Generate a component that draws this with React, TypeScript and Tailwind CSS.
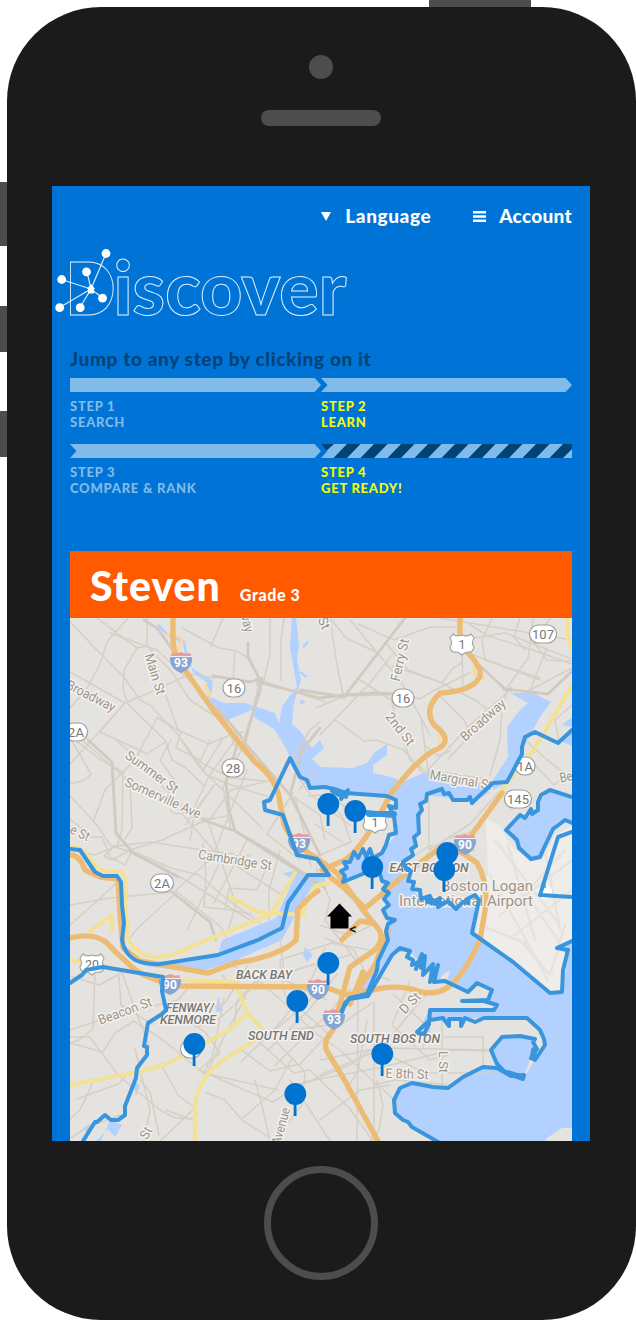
import React from "react";

const minorRoads = [
  "M70 622L95 648L123 676L140 700L150 705L178 735L200 768L223 790L262 828",
  "M97 618L137 648L124 670L123 690L128 704L165 740L172 760L186 768L203 785",
  "M128 618L107 642L100 664L86 690L70 708",
  "M137 648L147 646L147 618M147 646L172 672L190 700L213 715",
  "M110 633L157 650L205 695L226 722L234 744L262 768L281 785",
  "M70 672L125 703L160 688L190 674L214 678",
  "M124 704L100 732L135 748L147 754L165 742M125 703L70 764",
  "M157 718L135 760L105 790L93 822M158 718L181 732L176 748L200 760",
  "M166 696L178 730L209 744L228 736L243 732",
  "M182 628L219 648L237 651L248 658L260 680L325 702",
  "M223 618L211 646M235 651L233 682M270 618L270 654L264 680L256 685",
  "M284 618L281 640L281 680M330 618L337 665L344 699",
  "M259 682L246 742L230 770L223 788L231 830",
  "M70 736L101 760L123 772L122 830L117 846",
  "M70 738L91 774L85 780L70 784M82 740L130 782L132 828L125 839",
  "M170 800L215 852L282 895",
  "M116 740L133 755L157 781L188 812L175 814L170 810",
  "M171 740L160 760L177 784L165 797L151 792M182 740L207 775L231 785L272 798",
  "M210 740L200 762L231 778L265 781M222 740L202 772M235 740L209 776L186 825",
  "M215 784L195 812L190 840M205 797L191 817L210 819L231 790L268 781",
  "M70 796L97 825L110 845L133 853L160 866L187 881L250 920",
  "M70 819L92 837L102 837L110 857L125 865L133 849L162 840L206 820L227 816",
  "M73 850L95 855L117 846L151 842L202 850L250 856",
  "M115 846L104 856L112 860L130 850L171 868L199 875L228 900L263 925",
  "M70 905L110 898L174 892L212 858L247 770",
  "M70 925L96 902L120 880M177 892L138 928L128 940M177 892L221 927L230 945",
  "M220 862L200 903L187 930M203 843L206 875L204 907L231 910L251 914",
  "M207 818L236 905L228 930M247 840L214 903M266 869L257 890L229 888L225 910",
  "M280 851L269 890L269 919M290 795L320 815L325 840M300 780L311 795L325 805",
  "M295 797L306 840L311 867M290 762L310 730L320 722M299 790L315 770",
  "M293 793L267 834L300 860M308 796L322 795L342 816L351 842L320 855",
  "M322 805L350 825M330 794L360 820M315 824L342 842M316 868L330 900L325 920L357 962",
  "M316 708L344 696L400 625M330 618L346 638L376 652M344 696L386 695L402 693L420 699L433 691L471 672",
  "M350 620L400 680L420 716L430 735M358 624L394 640L430 627L460 627",
  "M360 680L391 700L410 760L427 772M385 642L408 670L442 683L453 668L462 663",
  "M392 666L440 682L455 690L477 701L490 712M392 655L370 683L320 735",
  "M335 720L364 741L376 740L404 750L423 773L447 773L494 780",
  "M421 718L428 771M440 696L464 720L471 735L448 759M450 751L438 756L424 745",
  "M428 770L470 725L510 690M490 775L500 740L502 710",
  "M440 618L572 640M466 622L488 636L530 649L572 664M492 618L482 640L485 660L540 678",
  "M462 642L460 620M462 653L463 688M460 640L505 633L572 659M465 652L540 680",
  "M520 618L514 637L525 650M533 618L528 658L507 688L505 699M547 648L530 690L572 668",
  "M551 618L532 640L547 660L560 661L572 661M530 760L554 785L570 772",
  "M572 705L555 720L559 742M525 740L545 758L560 770M505 785L478 830L450 838",
  "M429 850L470 824L505 785M429 800L429 850M405 862L429 846L475 850",
  "M320 925L350 936L372 925M325 938L354 950L365 972L390 980",
  "M70 976L99 985L122 973L138 1017L150 1047M95 972L93 1029L79 1040L70 1043",
  "M70 1030L113 1016L178 1000L194 981M119 976L121 1005L152 1024",
  "M70 1037L90 1037L118 1075L160 1110L175 1118L195 1119",
  "M70 1043L103 1052L115 1033L134 1021L163 1040L203 1073L278 1090",
  "M93 1082L80 1110L70 1119M77 1099L118 1084L130 1072M135 1049L150 1110L144 1141",
  "M140 1080L150 1092L159 1135M70 1138L88 1127L120 1115M160 1063L178 1095L197 1110",
  "M160 1141L196 1107M178 1014L205 1032L220 1053L200 1069M166 1110L193 1120",
  "M196 1027L219 1019L240 1000L265 975M224 998L213 1054L204 1073",
  "M200 1070L240 1088L273 1102L304 1082L378 1068L452 1050L496 1051",
  "M225 962L255 977L281 1000L315 1033L340 1050L372 1080L400 1105",
  "M222 975L245 998L225 1035L206 1075M248 965L225 1003L205 1010",
  "M263 973L237 1001L234 1027M280 962L285 996L322 1028L331 1037",
  "M240 1049L270 1071L300 1064L330 1032L372 1003M240 1048L280 1026L310 1000L320 987",
  "M258 1041L294 1073L310 1070L350 1109L373 1141M267 1032L305 1072L302 1105L273 1141",
  "M255 1080L263 1110L270 1141M243 1118L275 1090L291 1060M205 1092L225 1100L242 1120L275 1141",
  "M290 1080L310 1110L330 1141M300 1085L350 1065L370 1050M280 940L285 980L327 1000",
  "M325 948L307 989L280 1023L241 1062M337 974L309 1010L268 1050M350 989L327 1015L275 1065",
  "M280 960L332 943L369 950M288 972L350 955M267 980L314 964M282 1038L290 1030L330 1025",
  "M358 990L357 1141M374 1003L374 1141M367 1020L358 1070L346 1091M320 1075L379 1050L430 990",
  "M393 994L430 1029L423 1047M410 981L392 1025L430 1060L448 1055M442 1020L442 1085",
  "M444 1037L483 1037L483 1066M320 1060L379 1048L491 1050M378 1045L395 1058L425 1073L492 1073",
  "M377 1081L383 1105L379 1130L370 1141M375 1085L395 1080L450 1085M320 1120L360 1090L390 1085",
];

const mediumRoads = [
  "M144 620L158 629L174 652L204 699L220 711L242 738",
  "M258 682L320 698L344 695L375 693L400 694M300 690L344 697L405 618",
  "M213 676L250 682L262 678L260 690L244 742M248 643L248 657L260 680",
  "M465 652L505 689L548 694L572 671M88 740L112 762L116 833L133 853L178 877",
  "M238 742L226 782L229 810L235 831L320 885M203 820L235 831L278 856L325 888",
  "M244 742L290 795L320 855M172 892L210 922L216 940M290 795L302 750L320 728",
];

const highways = [
  "M173 618L173 642Q174 658 187 673L213 710L255 762Q278 780 280 803L284 824Q292 844 315 857L337 873L363 910L380 931Q384 943 372 952L350 967L343 993L333 1030Q322 1042 327 1051L345 1081L378 1141",
  "M460 618L460 645Q482 665 480 676Q474 691 440 693Q423 709 434 725Q457 742 433 751Q415 762 390 795Q364 847 345 860L322 870",
  "M502 793L462 848L437 850L407 873L363 910",
  "M440 848L463 853L477 863Q487 880 486 905L480 940Q466 971 453 983Q440 996 421 992Q403 985 382 988L347 995L325 987L180 986Q145 979 132 967Q112 949 107 943Q94 932 70 938",
  "M70 855Q80 855 85 870L100 877L118 879L120 915L123 948L140 961L208 973L235 963L252 960Q285 952 296 940L298 909Q311 895 318 891",
  "M325 873L344 888L365 908M342 940L360 921L373 923M363 972L350 1004M388 930L375 965L351 999",
];

const yellowRoads = [
  "M70 847Q84 846 93 863Q99 873 122 872Q127 878 125 900L128 939Q137 956 155 957Q175 957 190 947L252 922L272 913L295 873M230 897L258 912L304 915",
  "M70 960L180 980L235 982L247 1013L265 1032",
  "M70 1085L138 1072L165 1065L198 1047L232 1028L247 1013M265 1034L225 1059Q196 1078 195 1110L195 1141",
  "M572 685L535 748L500 792M568 618Q565 635 572 650",
  "M302 913L315 886L340 880M90 931L112 915L112 930",
];

const boundaries = [
  "M70 849L80 850L95 872L103 876L117 876L121 882L122 905L124 923L122 940Q124 953 135 960Q148 965 160 964L218 955L258 940L282 928L288 903L308 875L329 875L317 859L297 855L283 815L265 810L264 802L270 800L290 758L300 777L307 780L310 788L325 787L334 789L346 793L387 796L396 800L396 808L389 806L394 815L367 812",
  "M332 791L341 796L345 792L341 799L348 790L346 797M369 814L394 816L396 833L389 835L386 845L382 853L373 858L370 849L366 857L363 849L358 858L354 852L350 862L344 862L347 868L341 871L345 876L343 882L365 873",
  "M377 863L382 881L388 883L383 889L389 893L384 899L389 905L383 910L387 918L395 920L388 924L386 931L388 940L378 961L377 970L367 994L350 998L345 1003L342 1012",
  "M342 1010L349 999L368 996L392 955L400 948L410 951L407 957L413 960L412 965L418 962L416 969L422 954L421 968L425 956L423 975L433 964L430 982L438 965L434 982L445 981L468 992L477 983L492 990L488 1000L462 1001L484 1001L497 1005L494 1010L430 1010L429 1024L424 1034L417 1032L430 1020L443 1018L449 1026L449 1019L461 1019L461 1026L465 1018L475 1022L484 1018L527 1018L540 1030L544 1039L545 1045L535 1060L531 1058L537 1049L533 1042L535 1039L520 1036L502 1037L491 1050L497 1064L506 1073L523 1079L524 1075L511 1076L497 1068L483 1067L463 1077L448 1088L433 1087L412 1083L400 1088L394 1100L395 1113L403 1120L408 1122L412 1127L440 1143",
  "M572 730L558 743L535 732L525 737L522 747L522 754L507 782L493 783L477 798L472 803L470 797L467 800L453 800L449 793L444 794L442 789L427 794L426 801L420 804L422 810L418 815L419 833L414 837L416 846L411 849L413 855L403 862L406 869L411 871L408 881L414 882L412 889L420 890L421 899L430 896L433 903L440 898L438 907L448 901L456 909L463 902L468 903L467 899L475 895L479 900L472 933L513 962L550 993L562 992L563 970L568 950L557 948L572 941",
  "M572 797L550 790L541 795L538 802L538 810L532 814L531 809L525 818L520 815L506 830L517 840L519 848L531 859L540 857L543 850L553 829L565 820L572 823M572 832L558 837L540 895L572 897",
  "M70 983L82 975L86 970L103 967L163 977L162 991L166 1010L162 1014L148 1023L144 1046L147 1047L147 1055L137 1068L136 1078L125 1106L125 1115L118 1120L111 1120L105 1115L97 1122L95 1122L83 1141",
];

const pins = [
  [328, 804], [355, 811], [372, 867], [447, 853], [444, 870],
  [328, 963], [297, 1001], [194, 1044], [382, 1054], [295, 1094],
];

type Label = { t: string; x: number; y: number; w: number; r?: number; dark?: boolean; size?: number };
const labels: Label[] = [
  { t: "Main St", x: 155, y: 674, w: 42, r: 73 },
  { t: "Broadway", x: 91, y: 696, w: 53, r: 27 },
  { t: "Ferry St", x: 400, y: 660, w: 43, r: -77 },
  { t: "2nd St", x: 400, y: 729, w: 38, r: 52 },
  { t: "Broadway", x: 483, y: 720, w: 56, r: -42 },
  { t: "Marginal St", x: 461, y: 780, w: 63, r: 10 },
  { t: "Summer St", x: 152, y: 772, w: 62, r: 36 },
  { t: "Somerville Ave", x: 163, y: 798, w: 82, r: 24 },
  { t: "Cambridge St", x: 235, y: 860, w: 74, r: 9 },
  { t: "e St", x: 80, y: 833, w: 20, r: 25 },
  { t: "Be", x: 566, y: 777, w: 13, r: -13 },
  { t: "Beacon St", x: 125, y: 1011, w: 56, r: -20 },
  { t: "St", x: 146, y: 1133, w: 12, r: -60 },
  { t: "St", x: 324, y: 623, w: 12, r: 65 },
  { t: "way", x: 247, y: 622, w: 20, r: 75 },
  { t: "D St", x: 410, y: 1003, w: 24, r: -45 },
  { t: "L St", x: 443, y: 1062, w: 22, r: 90 },
  { t: "E 8th St", x: 407, y: 1074, w: 43, r: 2 },
  { t: "Avenue", x: 281, y: 1126, w: 38, r: -74 },
  { t: "EAST BOSTON", x: 429, y: 868, w: 79, dark: true },
  { t: "BACK BAY", x: 264, y: 975, w: 56, dark: true },
  { t: "FENWAY/", x: 190, y: 1008, w: 48, dark: true },
  { t: "KENMORE", x: 188, y: 1020, w: 56, dark: true },
  { t: "SOUTH END", x: 281, y: 1036, w: 66, dark: true },
  { t: "SOUTH BOSTON", x: 395, y: 1039, w: 90, dark: true },
  { t: "Boston Logan", x: 487, y: 886, w: 92, size: 15 },
  { t: "International Airport", x: 466, y: 901, w: 134, size: 15 },
];

const routes = [
  { t: "107", x: 543, y: 634, w: 27 }, { t: "16", x: 234, y: 688, w: 22 },
  { t: "16", x: 403, y: 698, w: 22 }, { t: "28", x: 233, y: 768, w: 22 },
  { t: "2A", x: 76, y: 732, w: 23 }, { t: "2A", x: 162, y: 883, w: 23 },
  { t: "1A", x: 525, y: 766, w: 20 }, { t: "145", x: 518, y: 799, w: 27 },
  { t: "", x: 191, y: 1049, w: 21 },
];

const interstates = [
  { t: "93", x: 181, y: 662 }, { t: "93", x: 299, y: 843 }, { t: "90", x: 465, y: 844 },
  { t: "90", x: 170, y: 984 }, { t: "90", x: 318, y: 989 }, { t: "93", x: 334, y: 1019 },
];

const federal = [
  { t: "1", x: 462, y: 644 }, { t: "1", x: 375, y: 822 }, { t: "20", x: 92, y: 964 },
];

function BostonMap() {
  return (
    <svg viewBox="70 618 502 523" className="block h-[523px] w-[502px] bg-[#e5e3df] font-[Roboto,sans-serif]">
      <g fill="#b3d1ff">
        <path d="M192 668L213 681L211 697L223 703L245 703L275 713L279 724L282 706L297 687L290 647L292 618H296L299 645L297 660L301 680L294 703L292 724L301 732L312 748L320 740L324 748L312 759L321 767L353 768L367 763L375 752L387 744L387 755L373 765L373 773L392 777L403 782L430 770L460 787L493 780L508 757L507 727L520 710L528 703L510 693L533 693L551 702L540 717L522 750L507 782L475 801L425 795L418 835L404 863L410 887L425 902L479 898L472 933L513 962L550 993L562 992L563 960L557 948L572 941V1141H440L408 1122L394 1110Q393 1090 412 1083L448 1088L483 1067H497L523 1079L535 1060L545 1045L540 1030L527 1018H430L417 1032L430 1009H495L488 1000L462 1001L488 998L492 990L477 983L468 992L437 980L410 952L392 952L368 995L350 999L378 963L388 940L383 882L373 870L345 880L344 862L382 853L397 833L396 800L346 793L325 787H310L300 777L285 747L274 729L255 718L252 710L225 721L208 698L207 683L192 671Z" />
        <path d="M310 876L298 870L283 873L293 880L276 918L222 940L218 955L160 964L132 958L144 966L198 972L232 962L282 940L298 910L312 887L325 885V877Z" />
        <path d="M572 797L550 790L538 803L537 813L520 817L506 830L518 847L531 859L540 857L557 822L572 823Z" />
        <path d="M500 690L512 687L511 692ZM568 720L572 718V727L562 725ZM558 740L572 730V746ZM301 699L306 702L300 705ZM83 1128L94 1122L88 1134ZM96 1141L108 1129L115 1137L122 1125L110 1120L101 1141ZM133 1081L140 1085L136 1096ZM305 947L313 955L307 962L303 955ZM218 995L222 1011L216 1012Z" />
      </g>
      <path d="M486 818L500 826L510 845L531 862L542 860L555 835L572 826V941L559 948L568 955L562 992L550 993L476 936L481 904L466 900L488 875Z" fill="#efedea" />
      <path d="M547 1138L562 1128L572 1128V1141H545ZM445 973L450 971L447 980L440 978Z" fill="#e5e3df" />
      <path d="M158 625L168 635L184 642L187 658L191 667M293 618L294 645M255 706L260 690M300 672L307 677M303 647L308 642" fill="none" stroke="#b3d1ff" strokeWidth="2.5" />
      <g fill="none" strokeLinejoin="round" strokeLinecap="round">
        <path d="M495 840L560 925M508 845L535 940M520 900L565 850M500 915L572 860M515 935L572 890M530 900L565 950M490 875L548 980M545 850L560 930M480 925L530 945M520 940L550 975L565 925" stroke="#e6e2de" strokeWidth="2.5" />
        {minorRoads.map((d) => <path key={d} d={d} stroke="#d6cfc6" strokeWidth="1.5" />)}
        {mediumRoads.map((d) => <path key={d} d={d} stroke="#d2cac1" strokeWidth="2.8" />)}
      </g>
      <path d="M502 1037L520 1036L535 1039L533 1045L536 1050L531 1058L523 1077L508 1072L497 1064L491 1050Z" fill="#b3d1ff" />
      <path d="M346 860L358 855L372 860L370 872L346 881Z" fill="#b3d1ff" />
      <g fill="none" strokeLinejoin="round" strokeLinecap="round">
        <path d="M167 635Q174 630 182 640L178 651M205 685L211 697M474 666L474 674L484 678M440 735L439 740" stroke="#f7dba0" strokeWidth="3" />
        {yellowRoads.map((d) => <path key={d} d={d} stroke="#f3e196" strokeWidth="4" />)}
        {highways.map((d) => <path key={d} d={d} stroke="#ecbc75" strokeWidth="5.4" />)}
      </g>
      <g textAnchor="middle">
        {labels.map((l, i) => (
          <text
            key={i}
            x={l.x}
            y={l.y + (l.dark ? 4 : 4.5)}
            transform={`rotate(${l.r ?? 0} ${l.x} ${l.y})`}
            textLength={l.w}
            lengthAdjust="spacingAndGlyphs"
            fontSize={l.size ?? (l.dark ? 12.5 : 13.5)}
            fontStyle={l.dark ? "italic" : "normal"}
            fontWeight={l.dark ? 500 : 400}
            fill={l.dark ? "#757575" : "#9c958a"}
            stroke="#f4f2ef"
            strokeWidth="3"
            strokeLinejoin="round"
            paintOrder="stroke"
          >
            {l.t}
          </text>
        ))}
        {routes.map((r, i) => (
          <g key={i}>
            <rect x={r.x - r.w / 2} y={r.y - 9} width={r.w} height="18" rx="9" fill="#fff" stroke="#9d9d9d" strokeWidth="1.2" />
            <text x={r.x} y={r.y + 4.5} fontSize="13" fill="#777">{r.t}</text>
          </g>
        ))}
        {federal.map((f, i) => (
          <g key={i} transform={`translate(${f.x} ${f.y})`}>
            <path d="M-9 -10Q-6 -7 0 -9Q6 -7 9 -10L12 -6Q9 -1 12 3Q11 9 6 8Q3 8 0 11Q-3 8 -6 8Q-11 9 -12 3Q-9 -1 -12 -6Z" fill="#fff" stroke="#a5a5a5" strokeWidth="1.2" />
            <text y="5" fontSize="12.5" fill="#777">{f.t}</text>
          </g>
        ))}
        {interstates.map((s, i) => (
          <g key={i} transform={`translate(${s.x} ${s.y})`}>
            <path d="M-9 -9Q-5 -7 0 -10Q5 -7 9 -9L11 -5H-11Z" fill="#e79a97" />
            <path d="M-11 -5H11Q12 6 0 11Q-12 6 -11 -5Z" fill="#86a5d1" />
            <path d="M-11 -5.5H11" stroke="#f5eeee" strokeWidth="1.2" />
            <text y="5" fontSize="12" fontWeight="700" fill="#fff">{s.t}</text>
          </g>
        ))}
      </g>
      <circle cx="545" cy="892" r="7" fill="#fff" />
      <path d="M545 884V888" stroke="#76d16b" strokeWidth="2" />
      <g fill="none" stroke="#3995de" strokeWidth="4" strokeLinejoin="round" strokeLinecap="round">
        {boundaries.map((d) => <path key={d} d={d} />)}
        <path d="M369 814H394M428 901L440 904M508 1073L521 1077M534 1050L533 1057" strokeWidth="6" />
      </g>
      <g fill="#0074d0" stroke="none">
        {pins.map(([x, y]) => (
          <g key={`${x}-${y}`}>
            <rect x={x - 1.3} y={y + 8} width="2.8" height="14" />
            <circle cx={x + 0.3} cy={y} r="10.9" />
          </g>
        ))}
      </g>
      <path d="M339.5 903.5L352 916.5H348.5V928.5H330.5V916.5H327Z" fill="#000" />
      <text x="349" y="934" fontSize="15" fontWeight="500" fill="#111">&lt;</text>
    </svg>
  );
}

function Logo() {
  return (
    <svg viewBox="52 240 538 84" className="block h-[84px] w-[538px] font-[Lato,sans-serif]">
      <g fill="none" stroke="#d9ebfb" strokeWidth="1">
        <text x="65.5" y="314.5" fontSize="73" fontWeight="900" textLength="50" lengthAdjust="spacingAndGlyphs">D</text>
        <text x="113.5" y="314.5" fontSize="74" fontWeight="900" textLength="233" lengthAdjust="spacingAndGlyphs">iscover</text>
      </g>
      <path d="M75 267H92Q110 270 110 288Q110 307 92 310H75Z" fill="#0074d6" />
      <path d="M91 289L106 253.500M91 289L87 272M91 289L61.500 279.500M91 289L59.500 307.500M91 289L80 307.500M91 289L102.500 298" stroke="#d9ebfb" strokeWidth="1.2" />
      <g fill="#fff">
        <circle cx="106" cy="253.500" r="4.400" /><circle cx="86.500" cy="271.800" r="4.400" />
        <circle cx="61.700" cy="279.500" r="4.400" /><circle cx="59.700" cy="307.700" r="4.400" />
        <circle cx="80.200" cy="307.700" r="4.400" /><circle cx="102.500" cy="298.200" r="4.400" />
        <path d="M91 284L95.200 289H94V293.500H88V289H86.800Z" />
      </g>
    </svg>
  );
}

type BarKind = "start" | "end" | "striped";

function StepBar({ kind }: { kind: BarKind }) {
  if (kind === "striped") {
    return (
      <svg viewBox="0 0 251 14" className="block h-[14px] w-[251px]">
        <path d="M0 0H251V14H0L6.500 7Z" fill="#80bbe9" />
        <path d="M0 0H13L5.700 6.500ZM26 0H39.500L26 14H12.500ZM53 0H66.500L53 14H39.500ZM80 0H93.500L80 14H66.500ZM107 0H120.500L107 14H93.500ZM134 0H147.500L134 14H120.500ZM161 0H174.500L161 14H147.500ZM188 0H201.500L188 14H174.500ZM215 0H228.500L215 14H201.500ZM242 0H251V5L242 14H228.500Z" fill="#004377" />
      </svg>
    );
  }
  return (
    <svg viewBox="0 0 251 14" className="block h-[14px] w-[251px]">
      <path d={kind === "start" ? "M0 0H244.500L251 7L244.500 14H0Z" : "M0 0H244.500L251 7L244.500 14H0L6.500 7Z"} fill="#80bbe9" />
    </svg>
  );
}

function Step({ kind, title, name, active }: { kind: BarKind; title: string; name: string; active?: boolean }) {
  return (
    <div className="h-[66px] w-[251px]">
      <StepBar kind={kind} />
      <div className={`pt-[5.5px] text-[13px] font-black leading-[16.5px] tracking-[0.75px] ${active ? "text-[#f3ff00]" : "text-[#80bbe9]"}`}>
        <div>{title}</div>
        <div>{name}</div>
      </div>
    </div>
  );
}

export default function App() {
  return (
    <div className="flex h-[1320px] w-[636px] flex-col overflow-hidden bg-white font-[Lato,sans-serif]">
      <div className="ml-[429px] h-[7px] w-[102px] shrink-0 bg-[#4d4d4d]" />
      <div className="flex h-[1313px]">
        <div className="w-[7px] shrink-0 pt-[175px]">
          <div className="h-[64px] bg-[#4d4d4d]" />
          <div className="mt-[60px] h-[46px] bg-[#4d4d4d]" />
          <div className="mt-[59px] h-[46px] bg-[#4d4d4d]" />
        </div>
        <div className="flex w-[629px] shrink-0 flex-col items-center rounded-[94px] bg-[#1b1b1b] pr-px pt-[48px]">
          <div className="size-[24px] shrink-0 rounded-full bg-[#4d4d4d]" />
          <div className="mt-[31px] h-[16px] w-[120px] shrink-0 rounded-[8px] bg-[#4d4d4d]" />
          <main className="mt-[60px] h-[955px] w-[538px] shrink-0 overflow-hidden bg-[#0074d6]">
            <nav className="flex h-[54px] items-center justify-end pr-[18px] pt-[6px] text-[19px] font-black text-white">
              <svg viewBox="0 0 10 9" className="mr-[14px] h-[9px] w-[10px]"><path d="M0 0H10L5 9Z" fill="white" /></svg>
              <span className="tracking-[0.6px]">Language</span>
              <svg viewBox="0 0 13 11" className="ml-[42px] mr-[13px] h-[11px] w-[13px]"><path d="M0 1.200H13M0 5.500H13M0 9.800H13" stroke="white" strokeWidth="2.400" /></svg>
              <span className="tracking-[0.3px]">Account</span>
            </nav>
            <Logo />
            <section className="px-[18px] pt-[24px]">
              <h2 className="h-[30px] whitespace-nowrap text-[19px] font-black leading-[22px] tracking-[0.63px] text-[#004377]">Jump to any step by clicking on it</h2>
              <div className="grid grid-cols-[251px_251px]">
                <Step kind="start" title="STEP 1" name="SEARCH" />
                <Step kind="end" title="STEP 2" name="LEARN" active />
                <Step kind="end" title="STEP 3" name="COMPARE & RANK" />
                <Step kind="striped" title="STEP 4" name="GET READY!" active />
              </div>
            </section>
            <section className="ml-[18px] mt-[41px] w-[502px]">
              <header className="flex h-[67px] items-baseline bg-[#ff5a00] pl-[20px] pt-[11px] text-white">
                <h1 className="text-[41px] font-black leading-[48px] tracking-[1px]">Steven</h1>
                <span className="ml-[19px] text-[16px] font-black tracking-[0.6px]">Grade 3</span>
              </header>
              <BostonMap />
            </section>
          </main>
          <div className="mt-[25px] size-[114px] shrink-0 rounded-full border-[7px] border-[#4d4d4d]" />
        </div>
      </div>
    </div>
  );
}
